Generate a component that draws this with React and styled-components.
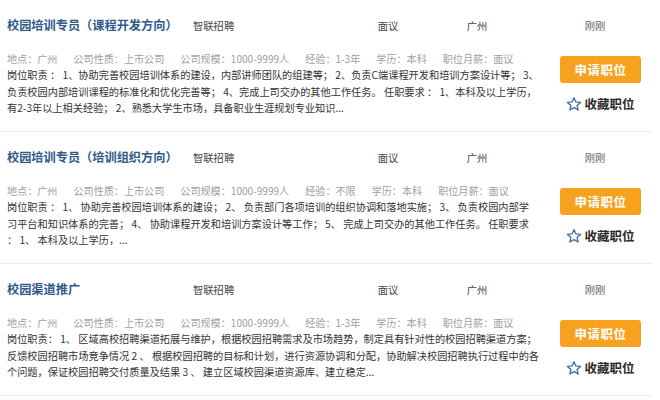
import React from "react";
import styled, { createGlobalStyle } from "styled-components";

const jobs = [
    {
        title: "校园培训专员（课程开发方向）",
        company: "智联招聘",
        salary: "面议",
        city: "广州",
        time: "刚刚",
        meta: ["地点：广州", "公司性质：上市公司", "公司规模：1000-9999人", "经验：1-3年", "学历：本科", "职位月薪：面议"],
        desc: [
            "岗位职责 ： 1、协助完善校园培训体系的建设，内部讲师团队的组建等； 2、负责C端课程开发和培训方案设计等； 3、",
            "负责校园内部培训课程的标准化和优化完善等； 4、完成上司交办的其他工作任务。 任职要求 ： 1、本科及以上学历，",
            "有2-3年以上相关经验； 2、熟悉大学生市场，具备职业生涯规划专业知识...",
        ],
    },
    {
        title: "校园培训专员（培训组织方向）",
        company: "智联招聘",
        salary: "面议",
        city: "广州",
        time: "刚刚",
        meta: ["地点：广州", "公司性质：上市公司", "公司规模：1000-9999人", "经验：不限", "学历：本科", "职位月薪：面议"],
        desc: [
            "岗位职责 ： 1、 协助完善校园培训体系的建设； 2、 负责部门各项培训的组织协调和落地实施； 3、 负责校园内部学",
            "习平台和知识体系的完善； 4、 协助课程开发和培训方案设计等工作； 5、 完成上司交办的其他工作任务。 任职要求",
            "： 1、 本科及以上学历，...",
        ],
    },
    {
        title: "校园渠道推广",
        company: "智联招聘",
        salary: "面议",
        city: "广州",
        time: "刚刚",
        meta: ["地点：广州", "公司性质：上市公司", "公司规模：1000-9999人", "经验：1-3年", "学历：本科", "职位月薪：面议"],
        desc: [
            "岗位职责： 1、 区域高校招聘渠道拓展与维护，根据校园招聘需求及市场趋势，制定具有针对性的校园招聘渠道方案；",
            "反馈校园招聘市场竞争情况 2 、 根据校园招聘的目标和计划，进行资源协调和分配，协助解决校园招聘执行过程中的各",
            "个问题，保证校园招聘交付质量及结果 3 、 建立区域校园渠道资源库、建立稳定...",
        ],
    },
];

const StarIcon = () => (
    <svg width="16" height="16" viewBox="0 0 24 24">
        <polygon
            points="12,2.5 14.9,8.9 21.8,9.6 16.6,14.2 18.1,21 12,17.5 5.9,21 7.4,14.2 2.2,9.6 9.1,8.9"
            fill="none"
            stroke="#3d6fa8"
            strokeWidth="2"
            strokeLinejoin="round"
        />
    </svg>
);

const App = () => (
    <>
        <GlobalStyle />
        <List>
            {jobs.map((job, i) => (
                <Card key={i}>
                    <TopRow>
                        <Title>{job.title}</Title>
                        <Cell>{job.company}</Cell>
                        <Cell center>{job.salary}</Cell>
                        <Cell center>{job.city}</Cell>
                        <Cell center muted>{job.time}</Cell>
                    </TopRow>
                    <Body>
                        <Info>
                            <Meta>
                                {job.meta.map((m, j) => (
                                    <span key={j}>{m}</span>
                                ))}
                            </Meta>
                            {job.desc.map((line, j) => (
                                <DescLine key={j}>{line}</DescLine>
                            ))}
                        </Info>
                        <Actions>
                            <ApplyButton>申请职位</ApplyButton>
                            <SaveLink>
                                <StarIcon />
                                收藏职位
                            </SaveLink>
                        </Actions>
                    </Body>
                </Card>
            ))}
        </List>
    </>
);

export default App;

const GlobalStyle = createGlobalStyle`
    body {
        margin: 0;
        background: #fff;
        font-family: "Noto Sans CJK SC", "Liberation Sans", sans-serif;
        color: #333;
    }
`;

const List = styled.div`
    width: 652px;
`;

const Card = styled.div`
    height: 132px;
    box-sizing: border-box;
    padding: 15px 0 0 7px;
    border-bottom: 1px solid #ececec;
`;

const TopRow = styled.div`
    display: grid;
    grid-template-columns: 186px 160px 70px 108px 128px;
    align-items: center;
    height: 20px;
`;

const Title = styled.div`
    font-size: 12.2px;
    font-weight: 700;
    color: #2f5a8b;
    white-space: nowrap;
`;

const Cell = styled.div`
    font-size: 10.3px;
    color: ${(p) => (p.muted ? "#666" : "#444")};
    text-align: ${(p) => (p.center ? "center" : "left")};
`;

const Body = styled.div`
    display: grid;
    grid-template-columns: 553px 81px;
    margin-top: 15px;
`;

const Info = styled.div`
    display: flex;
    flex-direction: column;
`;

const Meta = styled.div`
    display: flex;
    gap: 16px;
    font-size: 10.1px;
    line-height: 17px;
    color: #a0a0a0;
    white-space: nowrap;
`;

const DescLine = styled.div`
    font-size: 10.2px;
    line-height: 16.5px;
    color: #333;
    white-space: nowrap;
`;

const Actions = styled.div`
    display: flex;
    flex-direction: column;
    align-items: center;
    padding-top: 6px;
`;

const ApplyButton = styled.button`
    width: 81px;
    height: 27px;
    border: none;
    border-radius: 3px;
    background: #f7a21f;
    color: #fff;
    font-family: inherit;
    font-size: 12.5px;
    font-weight: 700;
    letter-spacing: 0.5px;
    cursor: pointer;
`;

const SaveLink = styled.div`
    display: flex;
    align-items: center;
    gap: 2px;
    margin-top: 11px;
    font-size: 12.5px;
    font-weight: 700;
    color: #2a2a2a;
    cursor: pointer;
`;
